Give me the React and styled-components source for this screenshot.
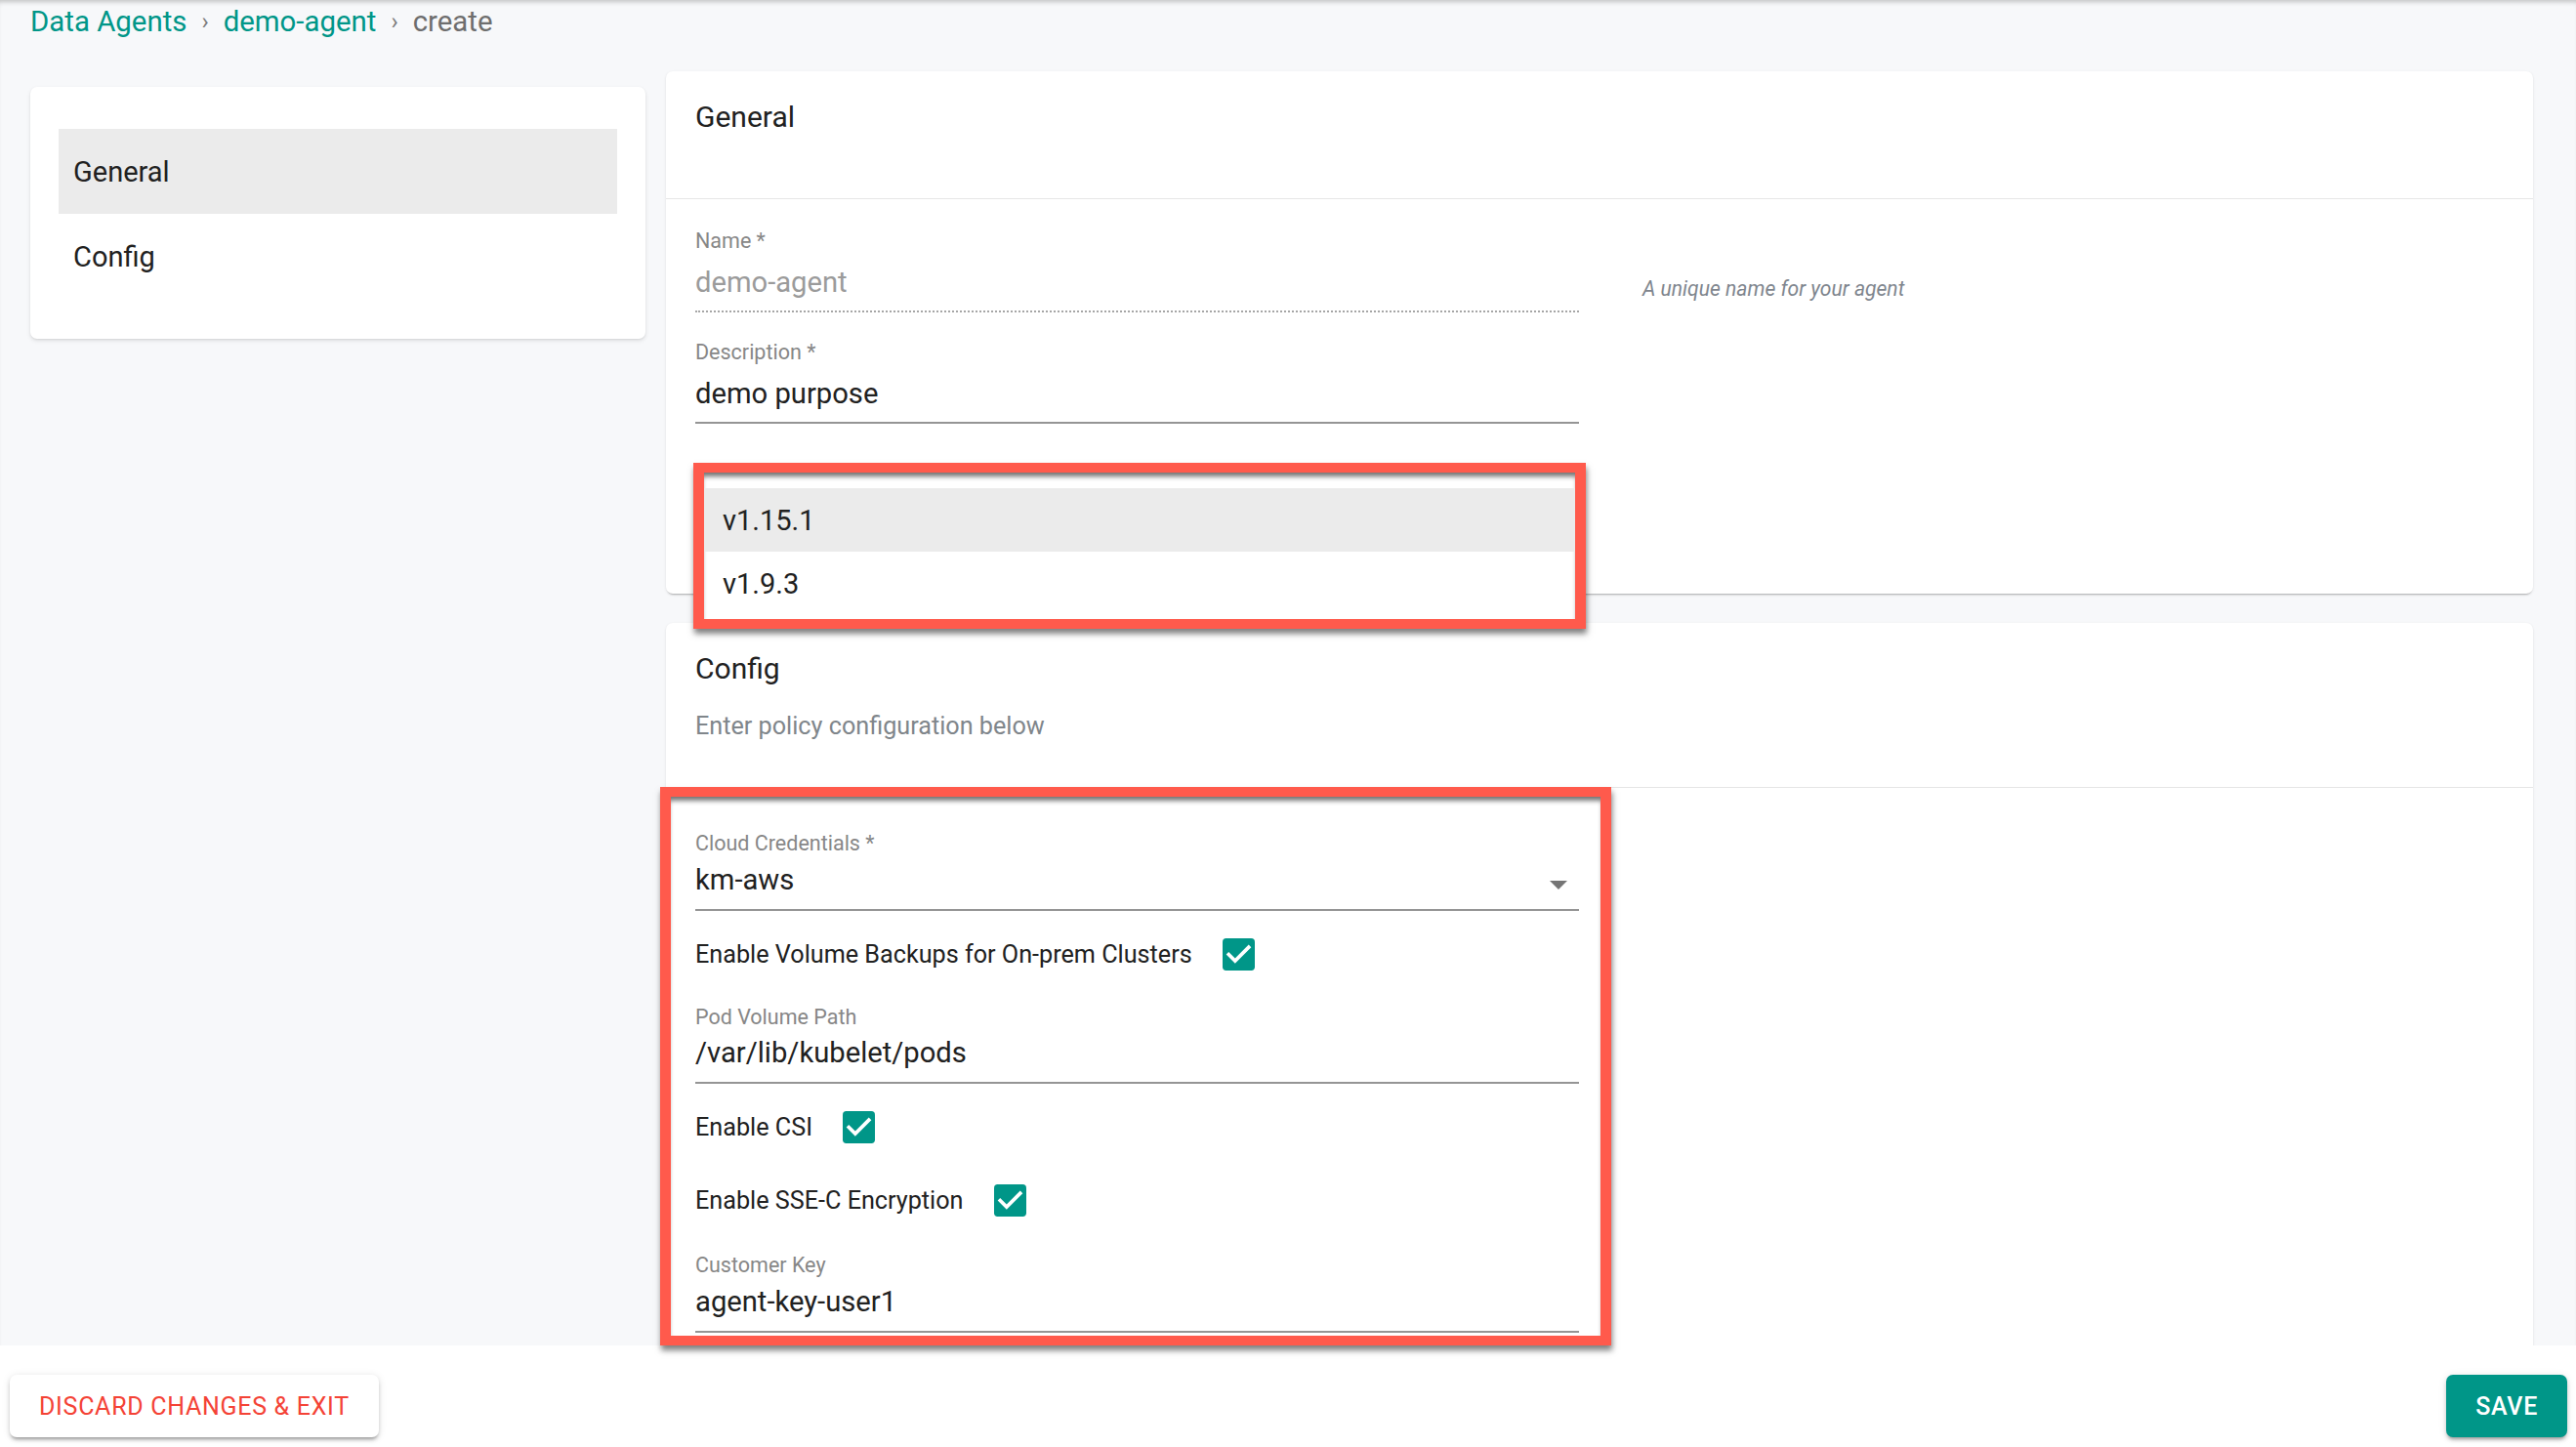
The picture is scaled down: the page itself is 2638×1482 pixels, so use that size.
import React from "react";
import styled, { createGlobalStyle } from "styled-components";

const GlobalStyle = createGlobalStyle`
  * { box-sizing: border-box; }
  html, body {
    margin: 0;
    padding: 0;
    height: 100%;
    overflow: hidden;
  }
  body {
    background: #f7f8fa;
    font-family: Roboto, "Liberation Sans", Arial, sans-serif;
    color: #212121;
  }
`;

const Page = styled.div`
  position: relative;
  min-height: 100vh;
  box-shadow: inset 0 5px 5px -3px rgba(0, 0, 0, 0.22);
`;

const Breadcrumbs = styled.nav`
  display: flex;
  align-items: center;
  height: 39px;
  padding: 5px 0 0 31px;
  font-size: 29.4px;
  line-height: 34px;
`;

const Crumb = styled.a`
  color: ${(p) => (p.$current ? "#6e6e6e" : "#009688")};
  text-decoration: none;
`;

const Sep = styled.span`
  color: #7a7a7a;
  font-size: 24px;
  margin: 0 15px;
`;

const Layout = styled.div`
  display: grid;
  grid-template-columns: 630px 1fr;
  column-gap: 21px;
  align-items: start;
  padding: 34px 44px 0 31px;
`;

const NavCard = styled.aside`
  margin-top: 16px;
  background: #fff;
  border-radius: 7px;
  padding: 43px 29px 41px;
  box-shadow: 0 2px 4px rgba(0, 0, 0, 0.1), 0 1px 2px rgba(0, 0, 0, 0.06);
`;

const NavItem = styled.div`
  display: flex;
  align-items: center;
  height: 87px;
  padding: 0 15px;
  font-size: 29px;
  color: #212121;
  background: ${(p) => (p.$active ? "#ebebeb" : "transparent")};
`;

const Column = styled.div`
  display: flex;
  flex-direction: column;
  gap: 30px;
`;

const Card = styled.section`
  position: relative;
  background: #fff;
  border-radius: 7px;
  box-shadow: 0 3px 2px -2px rgba(0, 0, 0, 0.25), 0 1px 3px rgba(0, 0, 0, 0.1);
`;

const CardHeader = styled.header`
  min-height: 131px;
  padding: 29px 30px 47px;
  border-bottom: 1px solid #e6e6e6;
`;

const CardTitle = styled.h2`
  margin: 0;
  font-size: 30px;
  line-height: 36px;
  font-weight: 400;
  color: #212121;
`;

const CardSubtitle = styled.p`
  margin: 26px 0 0;
  font-size: 25.2px;
  line-height: 30px;
  color: #80868b;
`;

const CardBody = styled.div`
  position: relative;
  display: flex;
  flex-direction: column;
  padding: ${(p) => p.$top}px 30px ${(p) => p.$bottom}px;
`;

const FieldRow = styled.div`
  display: grid;
  grid-template-columns: 905px 1fr;
  column-gap: 65px;
  margin-top: ${(p) => p.$mt || 0}px;
`;

const Field = styled.div`
  display: flex;
  flex-direction: column;
  width: 905px;
  margin-top: ${(p) => p.$mt || 0}px;
`;

const FieldLabel = styled.label`
  font-size: 21.5px;
  line-height: 24px;
  color: #878787;
`;

const FieldValue = styled.div`
  display: flex;
  align-items: center;
  justify-content: space-between;
  margin-top: ${(p) => p.$gap}px;
  padding-bottom: ${(p) => p.$pb || 11}px;
  font-size: 29.2px;
  line-height: 36px;
  color: ${(p) => (p.$disabled ? "#9b9b9b" : "#212121")};
  border-bottom: 2px ${(p) => (p.$disabled ? "dotted" : "solid")}
    ${(p) => (p.$disabled ? "#a6a6a6" : "#959595")};
`;

const Helper = styled.span`
  align-self: end;
  margin-bottom: 12px;
  font-size: 21.1px;
  line-height: 24px;
  font-style: italic;
  color: #7f868e;
`;

const ArrowIcon = styled.svg`
  margin: 10px 12px 0 0;
  flex: none;
`;

const CheckRow = styled.div`
  display: flex;
  align-items: center;
  gap: 31px;
  height: 32px;
  margin-top: ${(p) => p.$mt}px;
  font-size: 25.2px;
  color: #212121;
`;

const Annotation = styled.div`
  position: absolute;
  z-index: 20;
  top: ${(p) => p.$top}px;
  left: ${(p) => p.$left}px;
  width: ${(p) => p.$w}px;
  height: ${(p) => p.$h}px;
  border: 10px solid #ff5a4c;
  border-left-width: 11px;
  border-right-width: 11px;
  background: ${(p) => (p.$filled ? "#fff" : "transparent")};
  box-shadow: 1px 5px 6px rgba(0, 0, 0, 0.5),
    inset 0 6px 5px -2px rgba(0, 0, 0, 0.55);
  pointer-events: none;
`;

const MenuList = styled.ul`
  list-style: none;
  margin: 0;
  padding: 16px 0 0;
`;

const MenuItem = styled.li`
  display: flex;
  align-items: center;
  height: 65px;
  padding-left: 19px;
  font-size: 29px;
  color: #212121;
  background: ${(p) => (p.$selected ? "#ebebeb" : "transparent")};
`;

const Footer = styled.footer`
  position: fixed;
  left: 0;
  right: 0;
  bottom: 0;
  z-index: 10;
  height: 104px;
  display: flex;
  justify-content: space-between;
  align-items: flex-start;
  padding: 30px 9px 0 10px;
  background: #fff;
`;

const Button = styled.button`
  height: 64px;
  padding: 0 30px;
  border: none;
  border-radius: 7px;
  font-family: Roboto, "Liberation Sans", Arial, sans-serif;
  font-size: 25px;
  letter-spacing: 0.7px;
  text-transform: uppercase;
  font-weight: ${(p) => (p.$primary ? 500 : 400)};
  color: ${(p) => (p.$primary ? "#fff" : "#f44336")};
  background: ${(p) => (p.$primary ? "#009688" : "#fff")};
  box-shadow: 0 4px 3px -2px rgba(0, 0, 0, 0.22), 0 3px 4px rgba(0, 0, 0, 0.14),
    0 1px 8px rgba(0, 0, 0, 0.1);
  cursor: pointer;
`;

function CheckIcon() {
  return (
    <svg width="33" height="33" viewBox="3 3 18 18" aria-hidden="true">
      <rect x="3" y="3" width="18" height="18" rx="2" fill="#009688" />
      <path
        d="M10 17l-5-5 1.41-1.41L10 14.17l7.59-7.59L19 8l-9 9z"
        fill="#fff"
      />
    </svg>
  );
}

function DropArrow() {
  return (
    <ArrowIcon width="18" height="9" viewBox="0 0 18 9" aria-hidden="true">
      <polygon points="0,0 18,0 9,9" fill="#757575" />
    </ArrowIcon>
  );
}

function TextField({ label, value, disabled, gap, pb, mt }) {
  return (
    <Field $mt={mt}>
      <FieldLabel>{label}</FieldLabel>
      <FieldValue $gap={gap} $pb={pb} $disabled={disabled}>
        {value}
      </FieldValue>
    </Field>
  );
}

function CheckField({ label, mt }) {
  return (
    <CheckRow $mt={mt}>
      <span>{label}</span>
      <CheckIcon />
    </CheckRow>
  );
}

export default function App() {
  return (
    <>
      <GlobalStyle />
      <Page>
        <Breadcrumbs>
          <Crumb href="#">Data Agents</Crumb>
          <Sep>›</Sep>
          <Crumb href="#">demo-agent</Crumb>
          <Sep>›</Sep>
          <Crumb $current>create</Crumb>
        </Breadcrumbs>

        <Layout>
          <NavCard>
            <NavItem $active>General</NavItem>
            <NavItem>Config</NavItem>
          </NavCard>

          <Column>
            <Card>
              <CardHeader>
                <CardTitle>General</CardTitle>
              </CardHeader>
              <CardBody $top={31} $bottom={174}>
                <FieldRow>
                  <TextField label="Name *" value="demo-agent" disabled gap={12} />
                  <Helper>A unique name for your agent</Helper>
                </FieldRow>
                <FieldRow $mt={29}>
                  <TextField label="Description *" value="demo purpose" gap={12} />
                </FieldRow>
              </CardBody>
              <Annotation $filled $top={401} $left={28} $w={914} $h={170}>
                <MenuList>
                  <MenuItem $selected>v1.15.1</MenuItem>
                  <MenuItem>v1.9.3</MenuItem>
                </MenuList>
              </Annotation>
            </Card>

            <Card>
              <CardHeader>
                <CardTitle>Config</CardTitle>
                <CardSubtitle>Enter policy configuration below</CardSubtitle>
              </CardHeader>
              <CardBody $top={45} $bottom={120}>
                <Field>
                  <FieldLabel>Cloud Credentials *</FieldLabel>
                  <FieldValue $gap={7} $pb={12}>
                    <span>km-aws</span>
                    <DropArrow />
                  </FieldValue>
                </Field>
                <CheckField label="Enable Volume Backups for On-prem Clusters" mt={28} />
                <TextField label="Pod Volume Path" value="/var/lib/kubelet/pods" gap={6} pb={12} mt={37} />
                <CheckField label="Enable CSI" mt={28} />
                <CheckField label="Enable SSE-C Encryption" mt={43} />
                <TextField label="Customer Key" value="agent-key-user1" gap={7} pb={12} mt={39} />
                <Annotation $top={-1} $left={-6} $w={974} $h={572} />
              </CardBody>
            </Card>
          </Column>
        </Layout>

        <Footer>
          <Button>Discard Changes &amp; Exit</Button>
          <Button $primary>Save</Button>
        </Footer>
      </Page>
    </>
  );
}
